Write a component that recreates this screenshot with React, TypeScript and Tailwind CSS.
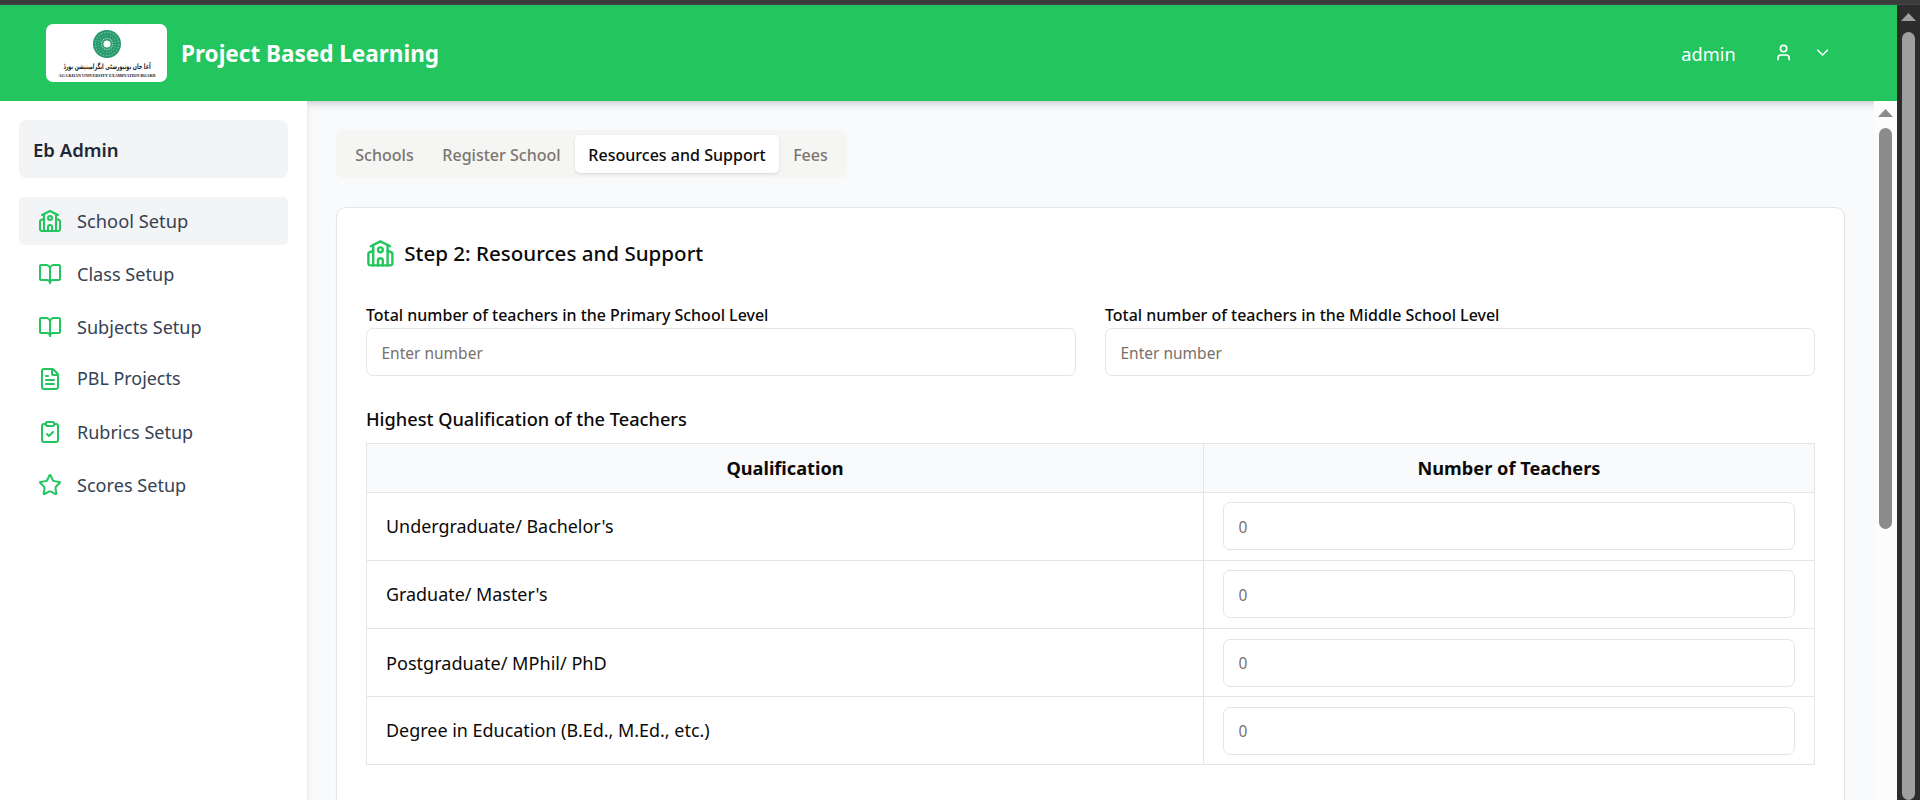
import type { ReactNode } from "react";
import { BookOpen, ChevronDown, ClipboardCheck, FileText, Star, User } from "lucide-react";

function SchoolIcon({ className }: { className: string }) {
  return (
    <svg
      className={`shrink-0 ${className}`}
      viewBox="0 0 24 24"
      fill="none"
      stroke="currentColor"
      strokeWidth="2"
      strokeLinecap="round"
      strokeLinejoin="round"
    >
      <path d="m4 6 8-4 8 4" />
      <path d="m18 10 3.1 1.05a1.3 1.3 0 0 1 .9 1.25V20a2 2 0 0 1-2 2H4a2 2 0 0 1-2-2v-7.7a1.3 1.3 0 0 1 .9-1.25L6 10" />
      <path d="M14 22v-4a2 2 0 0 0-4 0v4" />
      <path d="M18 5v17" />
      <path d="M6 5v17" />
      <circle cx="12" cy="9" r="2" />
    </svg>
  );
}

const navItems = [
  { label: "School Setup", icon: SchoolIcon, active: true, size: "text-[18.3px]" },
  { label: "Class Setup", icon: BookOpen, active: false, size: "text-[18.1px]" },
  { label: "Subjects Setup", icon: BookOpen, active: false, size: "text-[18.1px]" },
  { label: "PBL Projects", icon: FileText, active: false, size: "text-[17.9px]" },
  { label: "Rubrics Setup", icon: ClipboardCheck, active: false, size: "text-[18px]" },
  { label: "Scores Setup", icon: Star, active: false, size: "text-[18.1px]" },
];

const tabs = [
  { label: "Schools", active: false, width: "w-[87px]" },
  { label: "Register School", active: false, width: "w-[147px]" },
  { label: "Resources and Support", active: true, width: "w-[204px]" },
  { label: "Fees", active: false, width: "w-[63px]" },
];

const qualifications = [
  { name: "Undergraduate/ Bachelor's", size: "text-[17.9px]", pad: "pb-px" },
  { name: "Graduate/ Master's", size: "text-[17.9px]", pad: "pb-px" },
  { name: "Postgraduate/ MPhil/ PhD", size: "text-[18.1px]", pad: "py-0" },
  { name: "Degree in Education (B.Ed., M.Ed., etc.)", size: "text-[17.95px]", pad: "py-0" },
];

function Logo() {
  return (
    <svg className="h-[58px] w-[121px] shrink-0 rounded-[7px] bg-white" viewBox="0 0 121 58">
      <circle cx="61" cy="20" r="14" fill="#259a6c" />
      <circle cx="61" cy="20" r="11.6" fill="none" stroke="#6fbf9f" strokeWidth="1.3" strokeDasharray="1.6 1.4" />
      <circle cx="61" cy="20" r="8.6" fill="none" stroke="#66b898" strokeWidth="1.2" strokeDasharray="1.2 1.5" />
      <circle cx="61" cy="20" r="5.6" fill="none" stroke="#a9dcc7" strokeWidth="1.2" strokeDasharray="1 0.8" />
      <circle cx="61" cy="20" r="3.6" fill="#fff" />
      <g transform="translate(61 44.5) scale(1 1.55)">
        <text textAnchor="middle" direction="rtl" fontSize="4.8" fontWeight="700" fill="#222" fontFamily="DejaVu Sans, sans-serif">
          آغا خان یونیورسٹی ایگزامینیشن بورڈ
        </text>
      </g>
      <text x="61" y="53" textAnchor="middle" fontSize="4.2" fontWeight="700" fill="#111" textLength="97" lengthAdjust="spacingAndGlyphs" fontFamily="Liberation Serif, serif">
        AGA KHAN UNIVERSITY EXAMINATION BOARD
      </text>
    </svg>
  );
}

function Header() {
  return (
    <header className="relative z-10 flex h-24 shrink-0 items-center bg-[#22c55e] pr-[65px] pl-[46px] text-white shadow-[0_5px_7px_-1px_rgb(0_0_0/0.12),0_2px_5px_-2px_rgb(0_0_0/0.12)]">
      <Logo />
      <h1 className="ml-[14px] pt-[3px] text-[22.5px] leading-none font-bold">Project Based Learning</h1>
      <span className="ml-auto pt-[2px] text-[18.2px] leading-none">admin</span>
      <User className="ml-[38px] size-[19.2px]" />
      <ChevronDown className="ml-[20px] size-[19.2px]" />
    </header>
  );
}

function Sidebar() {
  return (
    <aside className="relative z-20 w-[307px] shrink-0 bg-white px-[19px] pt-[19px] shadow-[0_5px_7px_-1px_rgb(0_0_0/0.1),0_2px_5px_-2px_rgb(0_0_0/0.1)]">
      <div className="flex h-[58px] items-center rounded-[7px] bg-gray-100 pl-[14px]">
        <span className="pt-[2px] text-[18.5px] leading-none font-semibold text-gray-800">Eb Admin</span>
      </div>
      <nav className="mt-[19px] flex flex-col gap-[4.8px]">
        {navItems.map(({ label, icon: Icon, active, size }) => (
          <a
            key={label}
            className={`flex h-12 items-center gap-[15px] rounded-[5px] pl-[19px] text-gray-700 ${size} ${active ? "bg-gray-100" : ""}`}
          >
            <Icon className="size-6 text-[#22c55e]" />
            <span className="leading-none">{label}</span>
          </a>
        ))}
      </nav>
    </aside>
  );
}

function TabList() {
  return (
    <div className="flex h-12 w-[511px] items-center rounded-[7px] bg-[#f5f5f4] px-[5px] text-[16.05px] font-medium">
      {tabs.map(({ label, active, width }) => (
        <button
          key={label}
          className={`flex h-[38px] items-center justify-center rounded-[5px] pt-[2px] whitespace-nowrap ${width} ${
            active ? "bg-white text-stone-950 shadow-sm" : "text-[#7c7570]"
          }`}
        >
          {label}
        </button>
      ))}
    </div>
  );
}

function NumberField({ placeholder }: { placeholder: string }) {
  return (
    <input
      className="block h-12 w-full rounded-[7px] border border-[#e5e5e5] bg-white px-[14.5px] pt-px text-[15.5px] placeholder:text-[#78716c]"
      placeholder={placeholder}
    />
  );
}

function Labelled({ label, children }: { label: string; children: ReactNode }) {
  return (
    <label className="flex flex-1 flex-col">
      <span className="h-[23px] text-[15.97px] leading-[20px] font-medium text-stone-950">{label}</span>
      {children}
    </label>
  );
}

function QualificationTable() {
  return (
    <table className="mt-[12px] w-full table-fixed border-collapse text-stone-950">
      <colgroup>
        <col className="w-[837px]" />
        <col />
      </colgroup>
      <thead>
        <tr className="h-[49px] bg-gray-50 text-[18.2px] leading-none">
          <th className="border border-[#e5e5e5] font-bold">Qualification</th>
          <th className="border border-[#e5e5e5] font-bold">Number of Teachers</th>
        </tr>
      </thead>
      <tbody>
        {qualifications.map(({ name, size, pad }) => (
          <tr key={name} className="h-[68px]">
            <td className={`border border-[#e5e5e5] pt-px pl-[19px] leading-none ${size}`}>{name}</td>
            <td className={`border border-[#e5e5e5] px-[19px] ${pad}`}>
              <NumberField placeholder="0" />
            </td>
          </tr>
        ))}
      </tbody>
    </table>
  );
}

function ScrollArrow({ className }: { className: string }) {
  return (
    <svg className={`h-2 w-[15px] shrink-0 ${className}`} viewBox="0 0 15 8" fill="currentColor">
      <path d="M7.5 0 15 8H0Z" />
    </svg>
  );
}

export default function App() {
  return (
    <div className="flex h-[800px] w-[1920px] flex-col overflow-hidden bg-gray-50 font-['Noto_Sans','Liberation_Sans',sans-serif]">
      <div className="h-[5px] shrink-0 border-b border-[#484848] bg-[#3b3b3b]" />
      <div className="flex min-h-0 flex-1">
        <div className="flex w-[1897px] flex-col">
          <Header />
          <div className="flex min-h-0 flex-1">
            <Sidebar />
            <main className="min-w-0 flex-1 overflow-hidden bg-gray-50 px-[29px] pt-[29px]">
              <TabList />
              <section className="mt-[29px] h-[700px] rounded-[10px] border border-[#e5e5e5] bg-white px-[29px] shadow-xs">
                <div className="flex h-[91px] items-center gap-[9.5px] text-stone-950">
                  <SchoolIcon className="size-[28.8px] text-[#22c55e]" />
                  <h2 className="text-[20.55px] leading-none font-medium">Step 2: Resources and Support</h2>
                </div>
                <div className="mt-[6px] flex gap-[29px]">
                  <Labelled label="Total number of teachers in the Primary School Level">
                    <NumberField placeholder="Enter number" />
                  </Labelled>
                  <Labelled label="Total number of teachers in the Middle School Level">
                    <NumberField placeholder="Enter number" />
                  </Labelled>
                </div>
                <h3 className="mt-[30px] h-[25px] pt-px text-[18.2px] leading-[24px] font-medium text-stone-950">
                  Highest Qualification of the Teachers
                </h3>
                <QualificationTable />
              </section>
            </main>
            <div className="relative z-20 flex w-[23px] flex-col items-center bg-[#fcfcfc] pt-2">
              <ScrollArrow className="text-[#8b8b8b]" />
              <div className="mt-[11px] h-[401px] w-[13px] rounded-full bg-[#8b8b8b]" />
            </div>
          </div>
        </div>
        <div className="flex w-[23px] flex-col items-center bg-[#2c2c2c] pt-2">
          <ScrollArrow className="text-[#9f9f9f]" />
          <div className="mt-[11px] h-[768px] w-[13px] shrink-0 rounded-full bg-[#9f9f9f]" />
        </div>
      </div>
    </div>
  );
}
